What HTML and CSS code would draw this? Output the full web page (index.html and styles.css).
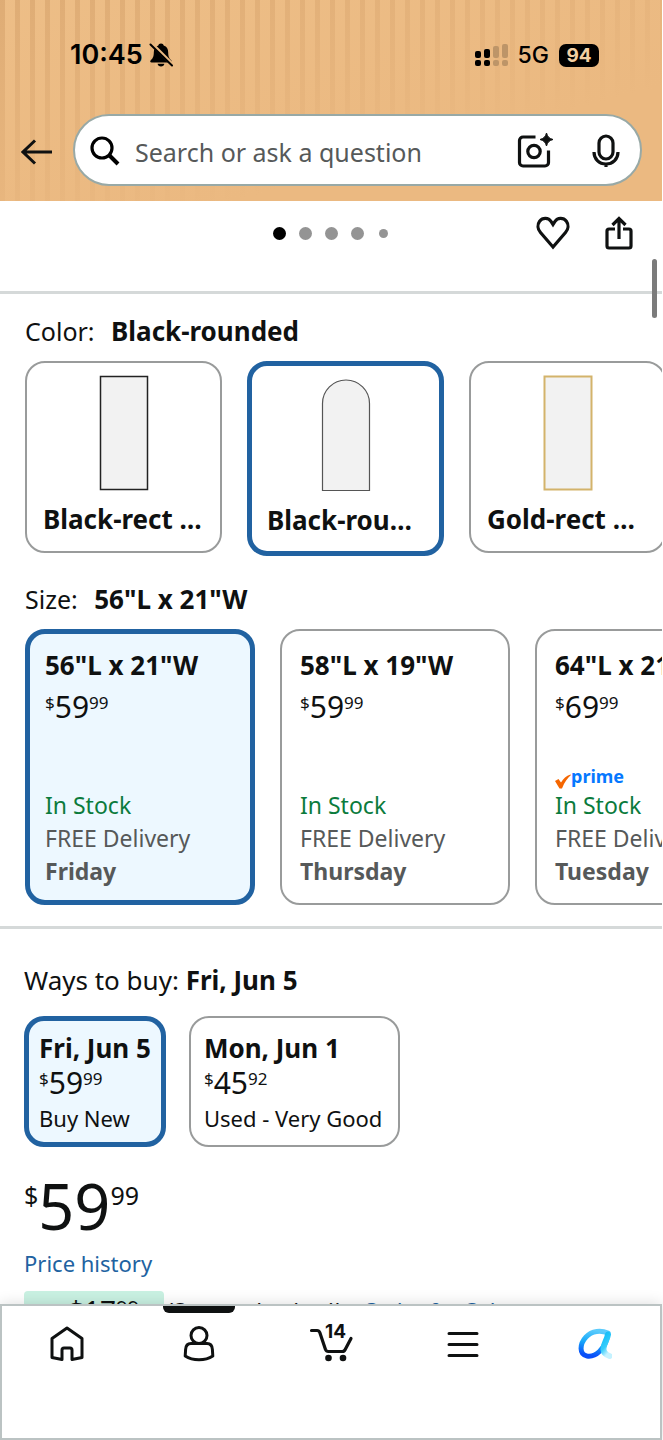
FILE: index.html
```html
<!DOCTYPE html>
<html lang="en">
<head>
<meta charset="utf-8">
<meta name="viewport" content="width=device-width, initial-scale=1">
<title>Product options</title>
<link rel="stylesheet" href="styles.css">
</head>
<body>
<header class="header">
  <div class="status">
    <div class="status-group">
      <span class="clock">10:45</span>
      <svg class="bell" width="24" height="26" viewBox="0 0 24 26" aria-hidden="true">
        <path d="M12 1.500c-1.500 0-2.500.9-2.700 2.100C6.200 4.700 4.800 7 4.800 10.500c0 4.300-1.200 6-3 7.700-1 1-.7 2.300.8 2.300h18.800c1.500 0 1.800-1.300.8-2.300-1.800-1.700-3-3.400-3-7.700 0-3.500-1.400-5.800-4.500-6.900C14.500 2.400 13.500 1.500 12 1.500zM8.600 21.700h6.800c-.3 1.700-1.600 2.800-3.400 2.800s-3.100-1.100-3.400-2.800z" fill="#000"/>
        <path d="M2.500 1.500l21 21" stroke="#ebb981" stroke-width="3.500"/>
        <path d="M1.500 2.500l21.500 21" stroke="#000" stroke-width="2" stroke-linecap="round"/>
      </svg>
    </div>
    <div class="status-group status-right">
      <svg width="33" height="24" viewBox="0 0 33 24" aria-hidden="true">
        <g fill="#000"><rect x="0" y="8" width="6" height="7" rx="2"/><rect x="9" y="6" width="6" height="9" rx="2"/><rect x="0" y="17" width="6" height="6" rx="2"/><rect x="9" y="17" width="6" height="6" rx="2"/></g>
        <g fill="#bd9568"><rect x="18" y="3" width="6" height="12" rx="2"/><rect x="27" y="1" width="6" height="14" rx="2"/><rect x="18" y="17" width="6" height="6" rx="2"/><rect x="27" y="17" width="6" height="6" rx="2"/></g>
      </svg>
      <span class="network">5G</span>
      <span class="battery">94</span>
    </div>
  </div>
  <div class="search-row">
    <button class="icon-button back" type="button" aria-label="Back">
      <svg width="32" height="26" viewBox="0 0 32 26" fill="none" stroke="#0f1111" stroke-width="3"><path d="M31 13H2M14 1.500L2 13l12 11.500"/></svg>
    </button>
    <form class="search" role="search">
      <svg width="30" height="30" viewBox="0 0 30 30" fill="none" stroke="#000" aria-hidden="true"><circle cx="12" cy="12" r="10" stroke-width="3.200"/><path d="M19.500 19.500L28 28" stroke-width="4"/></svg>
      <input class="search-input" type="text" placeholder="Search or ask a question" aria-label="Search or ask a question">
      <button class="icon-button" type="button" aria-label="Search by photo">
        <svg width="36" height="36" viewBox="0 0 36 36"><path d="M18.500 4H6a3.500 3.500 0 0 0-3.500 3.500v22A3.500 3.500 0 0 0 6 33h22a3.500 3.500 0 0 0 3.500-3.500V17.500" fill="none" stroke="#0f1111" stroke-width="3.200"/><circle cx="17" cy="18.500" r="6.200" fill="none" stroke="#0f1111" stroke-width="3.200"/><path d="M29.500 0c1.200 4 2.500 5.300 6.500 6.500-4 1.200-5.300 2.500-6.500 6.500-1.200-4-2.500-5.300-6.500-6.500 4-1.200 5.300-2.500 6.500-6.500z" fill="#0f1111" stroke="#0f1111"/></svg>
      </button>
      <button class="icon-button mic" type="button" aria-label="Search by voice">
        <svg width="28" height="34" viewBox="0 0 28 34" fill="none" stroke="#0f1111" stroke-width="3.200"><rect x="7" y="2" width="14" height="23" rx="7"/><path d="M2 18c0 7 5 12 12 12s12-5 12-12M14 29v4"/></svg>
      </button>
    </form>
  </div>
</header>

<main class="content">
  <div class="scroll-thumb"></div>
  <div class="gallery-bar">
    <div class="dots"><i class="dot dot-on"></i><i class="dot"></i><i class="dot"></i><i class="dot"></i><i class="dot dot-small"></i></div>
    <div class="gallery-actions">
      <button class="icon-button" type="button" aria-label="Add to list">
        <svg width="34" height="34" viewBox="0 0 34 34" fill="none" stroke="#0f1111" stroke-width="3.200" stroke-linejoin="miter"><path d="M17 31L4.500 16.500C1.500 13 1.200 8.500 3.600 5.200 6.600 1.400 12.500 1.500 15 5.500l2 3 2-3c2.500-4 8.400-4.100 11.400-.3 2.400 3.300 2.100 7.800-.9 11.300z"/></svg>
      </button>
      <button class="icon-button" type="button" aria-label="Share">
        <svg width="28" height="34" viewBox="0 0 28 34" fill="none" stroke="#0f1111" stroke-width="3.200"><path d="M10 13H4a2 2 0 0 0-2 2v15a2 2 0 0 0 2 2h20a2 2 0 0 0 2-2V15a2 2 0 0 0-2-2h-6M14 23V3M7.500 9L14 2.500 20.500 9"/></svg>
      </button>
    </div>
  </div>

  <section class="options">
    <h2 class="label">Color: <b class="label-value">Black-rounded</b></h2>
    <div class="cards">
      <button class="card swatch" type="button">
        <svg class="mirror" width="50" height="116" viewBox="0 0 50 116" aria-hidden="true"><rect x="1.500" y="1.500" width="47" height="113" fill="#f2f2f2" stroke="#222" stroke-width="1.500"/></svg>
        <b>Black-rect …</b>
      </button>
      <button class="card swatch selected" type="button" aria-pressed="true">
        <svg class="mirror" width="50" height="116" viewBox="0 0 50 116" aria-hidden="true"><path d="M1.500 114.500V27.500a23.500 23.500 0 0 1 47 0v87z" fill="#f2f2f2" stroke="#555" stroke-width="1.200"/></svg>
        <b>Black-rou…</b>
      </button>
      <button class="card swatch" type="button">
        <svg class="mirror" width="50" height="116" viewBox="0 0 50 116" aria-hidden="true"><rect x="1.500" y="1.500" width="47" height="113" fill="#f2f2f2" stroke="#d3b36b" stroke-width="2"/></svg>
        <b>Gold-rect …</b>
      </button>
    </div>
    <h2 class="label label-size">Size: <b class="label-value">56"L x 21"W</b></h2>
    <div class="cards">
      <button class="card size selected tinted" type="button" aria-pressed="true">
        <b>56"L x 21"W</b>
        <span class="price"><small>$</small>59<small>99</small></span>
        <span class="stock">In Stock</span>
        <span class="muted">FREE Delivery</span>
        <b class="muted">Friday</b>
      </button>
      <button class="card size" type="button">
        <b>58"L x 19"W</b>
        <span class="price"><small>$</small>59<small>99</small></span>
        <span class="stock">In Stock</span>
        <span class="muted">FREE Delivery</span>
        <b class="muted">Thursday</b>
      </button>
      <button class="card size" type="button">
        <b>64"L x 21"W</b>
        <span class="price"><small>$</small>69<small>99</small></span>
        <span class="prime"><svg width="16" height="16" viewBox="0 0 16 16" aria-hidden="true"><path d="M0 8l3.500-2L6 9.500C8.500 5.500 11 3 15.500 1.500L16 2C12.500 5 9.500 9 7 15.500H4.500z" fill="#f56600"/></svg>prime</span>
        <span class="stock">In Stock</span>
        <span class="muted">FREE Delivery</span>
        <b class="muted">Tuesday</b>
      </button>
    </div>
  </section>

  <section class="buying">
    <h2 class="label">Ways to buy: <b>Fri, Jun 5</b></h2>
    <div class="cards">
      <button class="card way selected tinted" type="button" aria-pressed="true">
        <b>Fri, Jun 5</b>
        <span class="price"><small>$</small>59<small>99</small></span>
        <span class="condition">Buy New</span>
      </button>
      <button class="card way" type="button">
        <b>Mon, Jun 1</b>
        <span class="price"><small>$</small>45<small>92</small></span>
        <span class="condition">Used - Very Good</span>
      </button>
    </div>
    <p class="total"><small>$</small>59<small>99</small></p>
    <a class="link" href="#history">Price history</a>
    <p class="saving"><span class="coupon">$17<small>99</small></span><span>(Save today (est))</span><a class="link" href="#sale">Order for Sale</a></p>
  </section>
</main>

<nav class="tabs" aria-label="Main">
  <a class="tab" href="#home" aria-label="Home">
    <svg width="36" height="36" viewBox="0 0 36 36" fill="none" stroke="#0f1111" stroke-width="3" stroke-linejoin="round"><path d="M17 2L32 12.500V31.500L22 33.500V24a2 2 0 0 0-2-2h-6a2 2 0 0 0-2 2v9.500L2 31.500V12.500z"/></svg>
  </a>
  <a class="tab tab-current" href="#you" aria-label="Your account">
    <svg width="36" height="36" viewBox="0 0 36 36" fill="none" stroke="#0f1111" stroke-width="3"><circle cx="18" cy="9.500" r="8"/><path d="M10 17.500h16c3.500 0 5.200 2.500 5.400 6l.4 6.500c-4 2.700-9 3.800-13.800 3.800S8.200 32.700 4.200 30l.4-6.500c.2-3.500 1.900-6 5.400-6z" stroke-linejoin="round"/></svg>
  </a>
  <a class="tab" href="#cart" aria-label="Cart, 14 items">
    <svg width="46" height="36" viewBox="0 0 46 36" fill="none" stroke="#0f1111" stroke-width="3.200" stroke-linecap="round" stroke-linejoin="round"><path d="M3.500 4.500H9q2 0 2.800 2l5.700 17q.8 2 2.800 2h14q2 0 2.900-2L43 12.500"/><circle cx="20.500" cy="32" r="3.300" fill="#0f1111" stroke="none"/><circle cx="35" cy="32" r="3.300" fill="#0f1111" stroke="none"/></svg>
    <span class="cart-count">14</span>
  </a>
  <a class="tab" href="#menu" aria-label="Menu">
    <svg width="32" height="36" viewBox="0 0 32 36" stroke="#0f1111" stroke-width="3" stroke-linecap="round"><path d="M2 7.500h28M2 18.500h28M2 29.500h28"/></svg>
  </a>
  <a class="tab" href="#assistant" aria-label="Assistant">
    <svg width="36" height="36" viewBox="0 0 36 36" fill="none" stroke-linecap="round">
      <defs>
        <linearGradient id="loop" x1="0.700" y1="0" x2="0.500" y2="1"><stop offset="0" stop-color="#5bcbfc"/><stop offset=".5" stop-color="#17a9fa"/><stop offset="1" stop-color="#0a4ff8"/></linearGradient>
        <linearGradient id="tail" x1="0" y1="0" x2="0.300" y2="1"><stop offset="0" stop-color="#12bdf8"/><stop offset=".6" stop-color="#35cdfb"/><stop offset="1" stop-color="#c5f2ff"/></linearGradient>
      </defs>
      <path d="M32 7C25 4 16 4.500 10 11c-6.500 7-7 17.500 1 19 9.500 1.500 17-8 20-17" stroke="url(#loop)" stroke-width="5"/>
      <path d="M32 8.500c-1 6-5 10-4.500 15 .3 4 3 5.500 6 6.500" stroke="url(#tail)" stroke-width="6"/>
    </svg>
  </a>
</nav>
</body>
</html>
```

FILE: styles.css
```css
* { box-sizing: border-box; }

body {
  margin: 0;
  height: 100vh;
  display: flex;
  flex-direction: column;
  padding-right: 1px;
  overflow: hidden;
  background: #fff;
  color: #0f1111;
  font: 26px/32px "Noto Sans", sans-serif;
}

button, input { font: inherit; color: inherit; }
h2, p { margin: 0; font-weight: 400; }
svg { display: block; flex: none; }
a { text-decoration: none; }

.icon-button { padding: 0; border: 0; background: none; }

/* Header */
.header {
  flex: none;
  padding: 37px 20px 15px 21px;
  background:
    linear-gradient(165deg, rgba(236, 186, 130, .1) 0%, #ebb981 70%),
    repeating-linear-gradient(90deg, #ddab74 0 5px, #edbe87 5px 15px);
}
.status {
  display: flex;
  justify-content: space-between;
  height: 36px;
  padding: 0 43px 0 49px;
  font-family: Inter, sans-serif;
  color: #000;
}
.status-group { display: flex; align-items: center; gap: 6px; }
.status-right { gap: 10px; }
.clock { font-size: 27px; font-weight: 600; }
.network { font-size: 23px; font-weight: 500; }
.battery {
  width: 40px;
  border-radius: 7px;
  background: #000;
  color: #f3cfa2;
  font-size: 19px;
  font-weight: 700;
  line-height: 23px;
  text-align: center;
}
.search-row { display: flex; align-items: center; gap: 20px; margin-top: 41px; }
.back { padding-top: 3px; }
.search {
  flex: 1;
  display: flex;
  align-items: center;
  height: 72px;
  padding: 2px 20px 0 15px;
  border: 2px solid #98a9a6;
  border-radius: 36px;
  background: #fff;
}
.search-input {
  flex: 1;
  min-width: 0;
  padding: 2px 15px 0;
  border: 0;
  outline: 0;
  background: none;
  font-size: 25px;
}
.search-input::placeholder { color: #565959; opacity: 1; }
.mic { margin-left: 39px; }

/* Product content */
.content { position: relative; flex: 1; min-height: 0; overflow: hidden; }
.scroll-thumb {
  position: absolute;
  top: 58px;
  right: 5px;
  width: 5px;
  height: 59px;
  border-radius: 3px;
  background: #7b7b7b;
}
.gallery-bar {
  display: grid;
  grid-template-columns: 1fr auto 1fr;
  align-items: start;
  height: 93px;
  padding: 15px 29px 0 27px;
  border-bottom: 3px solid #d5d9d9;
}
.dots { grid-column: 2; display: flex; align-items: center; gap: 13px; height: 34px; }
.dot { width: 13px; height: 13px; border-radius: 50%; background: #949494; }
.dot-on { background: #000; }
.dot-small { width: 9px; height: 9px; margin-left: 2px; }
.gallery-actions { display: flex; justify-content: flex-end; gap: 35px; }

.options { padding: 21px 0 21px 25px; border-bottom: 3px solid #d5d9d9; }
.label { margin-bottom: 14px; font-size: 26px; }
.options .label { font-size: 25px; }
.label-value { margin-left: 10px; font-size: 26px; }
.label-size { margin-top: 27px; }

.cards { display: flex; align-items: flex-start; gap: 25px; overflow: hidden; }
.card {
  flex: none;
  display: flex;
  flex-direction: column;
  align-items: flex-start;
  padding: 0;
  border: 2px solid #999b9b;
  border-radius: 20px;
  background: #fff;
  text-align: left;
  white-space: nowrap;
}
.selected { border: 5px solid #2162a1; }
.tinted { background: #edf8ff; }

.swatch { gap: 12px; width: 197px; padding: 12px 16px 16px; }
.swatch.selected { padding: 10px 15px 15px; }
.mirror { align-self: center; }

.size { width: 230px; height: 276px; padding: 16px 18px 15px; font-size: 23px; line-height: 33px; }
.size.selected { padding: 13px 15px 12px; }
.size > b:first-child { font-size: 26px; line-height: 36px; }
.stock { margin-top: auto; color: #0b7b3c; }
.prime + .stock { margin-top: 0; }
.muted { color: #565959; }
.prime {
  display: flex;
  align-items: flex-end;
  margin-top: auto;
  color: #0578ff;
  font-size: 18px;
  font-weight: 700;
  line-height: 26px;
}

.price { display: flex; font-size: 30px; line-height: 38px; }
.price small { font-size: 17px; line-height: 30px; }
.size .price { margin-top: 5px; }

/* Buying options */
.buying { padding: 35px 24px 0; }
.buying .label { margin-bottom: 20px; }
.buying .cards { gap: 23px; }
.way { height: 131px; padding: 14px 16px 14px 13px; }
.way.selected { padding: 11px 10px; }
.way .price { line-height: 38px; }
.way .price small { line-height: 30px; }
.condition { font-size: 22px; line-height: 33px; }

.total { display: flex; margin-top: 17px; font-size: 63px; line-height: 84px; }
.total small { font-size: 25px; line-height: 62px; }
.link { color: #2162a1; font-size: 22px; }
.buying > .link { display: block; line-height: 30px; }
.saving { display: flex; gap: 3px; margin-top: 13px; font-size: 22px; line-height: 38px; white-space: nowrap; }
.saving .link { margin-left: 18px; }
.coupon {
  display: flex;
  width: 140px;
  padding-left: 44px;
  border-radius: 4px 4px 0 0;
  background: #c9f1e2;
  font-size: 28px;
}
.coupon small { font-size: 20px; line-height: 34px; }

/* Bottom tabs */
.tabs {
  position: relative;
  flex: none;
  display: flex;
  height: 136px;
  border: 2px solid #bbc3c3;
  background: #fff;
  box-shadow: 0 0 14px rgba(15, 17, 17, .14);
}
.tab { position: relative; flex: 1; display: flex; justify-content: center; padding-top: 20px; color: #0f1111; }
.tab-current::before {
  content: "";
  position: absolute;
  top: 0;
  width: 72px;
  height: 7px;
  border-radius: 0 0 6px 6px;
  background: #0f1111;
}
.cart-count {
  position: absolute;
  top: 16px;
  left: 50%;
  margin-left: -6px;
  font: 700 19px/20px Inter, sans-serif;
}
```
